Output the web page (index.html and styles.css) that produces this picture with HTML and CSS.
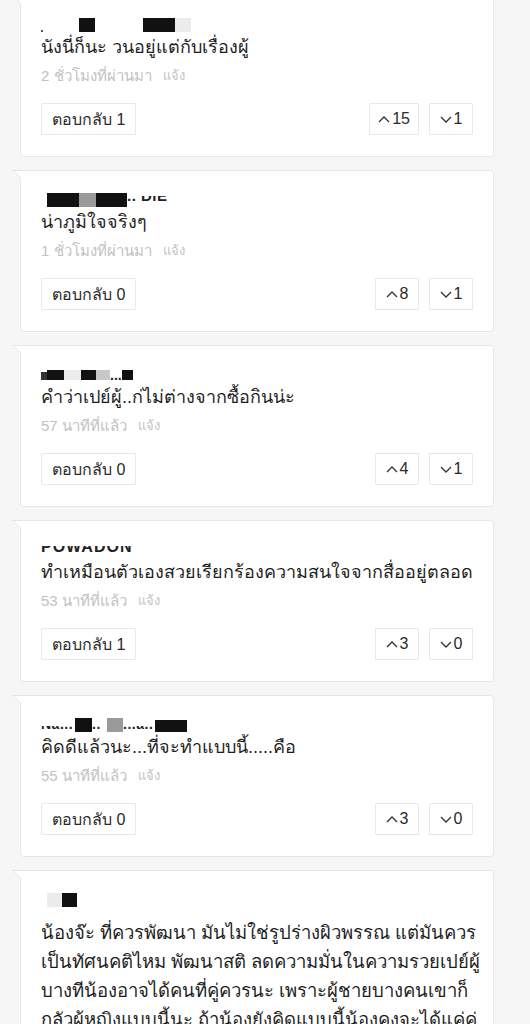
FILE: index.html
```html
<!DOCTYPE html>
<html lang="th">
<head>
<meta charset="utf-8">
<title>ความคิดเห็น</title>
<link rel="stylesheet" href="styles.css">
</head>
<body>
<main class="feed">

  <article class="card">
    <div class="user">
      <span class="speck"></span>
      <span class="blk b1a"></span>
      <span class="blk b1b"></span><span class="lt b1c"></span>
    </div>
    <p class="text">นังนี่ก็นะ วนอยู่แต่กับเรื่องผู้</p>
    <div class="meta"><span>2 ชั่วโมงที่ผ่านมา</span><span class="report">แจ้ง</span></div>
    <div class="actions">
      <button class="btn reply">ตอบกลับ 1</button>
      <div class="votes">
        <button class="btn vote"><svg viewBox="0 0 12 7" class="chev"><polyline points="1,6 6,1 11,6"/></svg>15</button>
        <button class="btn vote"><svg viewBox="0 0 12 7" class="chev"><polyline points="1,1 6,6 11,1"/></svg>1</button>
      </div>
    </div>
  </article>

  <article class="card">
    <div class="user">
      <span class="blk b2a"></span><span class="gry b2b"></span><span class="blk b2c"></span><span class="cut"><span>.. DIE</span></span>
    </div>
    <p class="text">น่าภูมิใจจริงๆ</p>
    <div class="meta"><span>1 ชั่วโมงที่ผ่านมา</span><span class="report">แจ้ง</span></div>
    <div class="actions">
      <button class="btn reply">ตอบกลับ 0</button>
      <div class="votes">
        <button class="btn vote"><svg viewBox="0 0 12 7" class="chev"><polyline points="1,6 6,1 11,6"/></svg>8</button>
        <button class="btn vote"><svg viewBox="0 0 12 7" class="chev"><polyline points="1,1 6,6 11,1"/></svg>1</button>
      </div>
    </div>
  </article>

  <article class="card">
    <div class="user low">
      <span class="blk b3u"></span><span class="blk b3a"></span><span class="lt b3b"></span><span class="blk b3c"></span><span class="gry b3d"></span><span class="dots">...</span><span class="blk b3g"></span>
    </div>
    <p class="text">คำว่าเปย์ผู้..ก่ไม่ต่างจากซื้อกินน่ะ</p>
    <div class="meta"><span>57 นาทีที่แล้ว</span><span class="report">แจ้ง</span></div>
    <div class="actions">
      <button class="btn reply">ตอบกลับ 0</button>
      <div class="votes">
        <button class="btn vote"><svg viewBox="0 0 12 7" class="chev"><polyline points="1,6 6,1 11,6"/></svg>4</button>
        <button class="btn vote"><svg viewBox="0 0 12 7" class="chev"><polyline points="1,1 6,6 11,1"/></svg>1</button>
      </div>
    </div>
  </article>

  <article class="card">
    <div class="user low">
      <span class="cut wide"><span>POWADON</span></span>
    </div>
    <p class="text">ทำเหมือนตัวเองสวยเรียกร้องความสนใจจากสื่ออยู่ตลอด</p>
    <div class="meta"><span>53 นาทีที่แล้ว</span><span class="report">แจ้ง</span></div>
    <div class="actions">
      <button class="btn reply">ตอบกลับ 1</button>
      <div class="votes">
        <button class="btn vote"><svg viewBox="0 0 12 7" class="chev"><polyline points="1,6 6,1 11,6"/></svg>3</button>
        <button class="btn vote"><svg viewBox="0 0 12 7" class="chev"><polyline points="1,1 6,6 11,1"/></svg>0</button>
      </div>
    </div>
  </article>

  <article class="card">
    <div class="user">
      <span class="cut n5"><span>Na...</span></span><span class="blk b5a"></span><span class="cut n5b"><span>..</span></span><span class="gry b5b"></span><span class="cut n5c"><span>...a..</span></span><span class="blk b5c"></span>
    </div>
    <p class="text">คิดดีแล้วนะ...ที่จะทำแบบนี้.....คือ</p>
    <div class="meta"><span>55 นาทีที่แล้ว</span><span class="report">แจ้ง</span></div>
    <div class="actions">
      <button class="btn reply">ตอบกลับ 0</button>
      <div class="votes">
        <button class="btn vote"><svg viewBox="0 0 12 7" class="chev"><polyline points="1,6 6,1 11,6"/></svg>3</button>
        <button class="btn vote"><svg viewBox="0 0 12 7" class="chev"><polyline points="1,1 6,6 11,1"/></svg>0</button>
      </div>
    </div>
  </article>

  <article class="card">
    <div class="user">
      <span class="lt b6a"></span><span class="blk b6b"></span>
    </div>
    <p class="text long">
      <span class="line">น้องจ๊ะ ที่ควรพัฒนา มันไม่ใช่รูปร่างผิวพรรณ แต่มันควร</span>
      <span class="line">เป็นทัศนคติไหม พัฒนาสติ ลดความมั่นในความรวยเปย์ผู้</span>
      <span class="line">บางทีน้องอาจได้คนที่คู่ควรนะ เพราะผู้ชายบางคนเขาก็</span>
      <span class="line">กลัวผู้หญิงแบบนี้นะ ถ้าน้องยังคิดแบบนี้น้องคงจะได้แค่คู่</span>
      <span class="line">นอน ไม่ใช่คู่ชีวิต</span>
    </p>
  </article>

</main>
</body>
</html>
```

FILE: styles.css
```css
* { box-sizing: border-box; }

body {
  margin: 0;
  background: #f6f6f6;
  font-family: "Liberation Sans", Arial, "Noto Sans", sans-serif;
  color: #222;
  overflow: hidden;
}

.feed {
  display: flex;
  flex-direction: column;
  gap: 13px;
  padding: 0 36px 0 20px;
  margin-top: -5px;
}

.card {
  position: relative;
  background: #fff;
  border: 1px solid #e7e7e7;
  border-radius: 0 4px 4px 4px;
  padding: 19px 20px 21px;
}

/* speech-bubble tail at the top left */
.card::before,
.card::after {
  content: "";
  position: absolute;
  top: -1px;
  width: 9px;
  height: 9px;
  clip-path: polygon(0 0, 100% 0, 100% 100%);
}
.card::before {
  left: -9px;
  background: #e4e4e4;
}
.card::after {
  left: -7px;
  top: 0;
  width: 8px;
  height: 8px;
  background: #fff;
}

/* redacted user names */
.user {
  height: 18px;
  display: flex;
  align-items: center;
  padding-top: 1px;
}
.user.low { align-items: flex-end; padding-bottom: 3px; }
.user span { flex: none; }
.blk { background: #111; height: 14px; }
.gry { background: #9a9a9a; height: 14px; }
.lt  { background: #ececec; height: 14px; }

.speck { width: 2px; height: 2px; background: #555; margin-top: 12px; margin-right: 36px; }
.b1a { width: 16px; }
.b1b { width: 32px; margin-left: 48px; }
.b1c { width: 16px; }

.b2a { width: 32px; margin-left: 6px; }
.b2b { width: 17px; }
.b2c { width: 31px; }

.b3u { width: 6px; height: 8px !important; background: #333; }
.b3a { width: 17px; height: 10px; }
.b3b { width: 17px; height: 10px; }
.b3c { width: 15px; height: 10px; }
.b3d { width: 14px; height: 10px; background: #c8c8c8; }
.b3g { width: 11px; height: 10px; }
.dots { font-weight: bold; font-size: 14px; line-height: 10px; color: #222; height: 10px; }

.cut {
  display: flex;
  align-items: flex-end;
  height: 8px;
  overflow: hidden;
  font-weight: bold;
  font-size: 15px;
  line-height: 16px;
  color: #222;
  letter-spacing: 0.5px;
}
.cut span { display: block; }
.cut.wide { height: 9px; font-size: 16px; letter-spacing: 1px; }

.n5 { height: 6px; font-size: 14px; margin-top: 8px; }
.n5b { height: 6px; font-size: 14px; margin-top: 8px; width: 15px; }
.n5c { height: 6px; font-size: 14px; margin-top: 8px; width: 32px; }
.b5a { width: 17px; height: 14px; margin-left: 2px; }
.b5b { width: 16px; height: 14px; }
.b5c { width: 32px; height: 12px; margin-top: 2px; }

.b6a { width: 15px; margin-left: 6px; }
.b6b { width: 15px; }

/* comment text */
.text {
  margin: 0;
  height: 28px;
  font-size: 18px;
  line-height: 28px;
  color: #1e1e1e;
  white-space: nowrap;
}
.text.long {
  height: auto;
  font-size: 18.5px;
  line-height: 29px;
  margin-top: 10px;
}
.line { display: block; height: 29px; }

.meta {
  margin-top: 5px;
  height: 20px;
  display: flex;
  gap: 11px;
  align-items: center;
  font-size: 15px;
  line-height: 20px;
  color: #c2c2c2;
}
.report { font-size: 13px; }

/* action buttons */
.actions {
  margin-top: 17px;
  display: flex;
  justify-content: space-between;
  align-items: center;
}
.votes { display: flex; gap: 10px; }

.btn {
  height: 32px;
  background: #fff;
  border: 1px solid #e9e9e9;
  border-radius: 1px;
  font-family: inherit;
  font-size: 16px;
  color: #2a2a2a;
  display: flex;
  align-items: center;
  justify-content: center;
  padding: 0 10px;
}
.vote {
  min-width: 44px;
  padding: 0 8px;
  gap: 2px;
}
.chev {
  width: 12px;
  height: 7px;
  fill: none;
  stroke: #333;
  stroke-width: 1.3;
  stroke-linejoin: miter;
}
```
